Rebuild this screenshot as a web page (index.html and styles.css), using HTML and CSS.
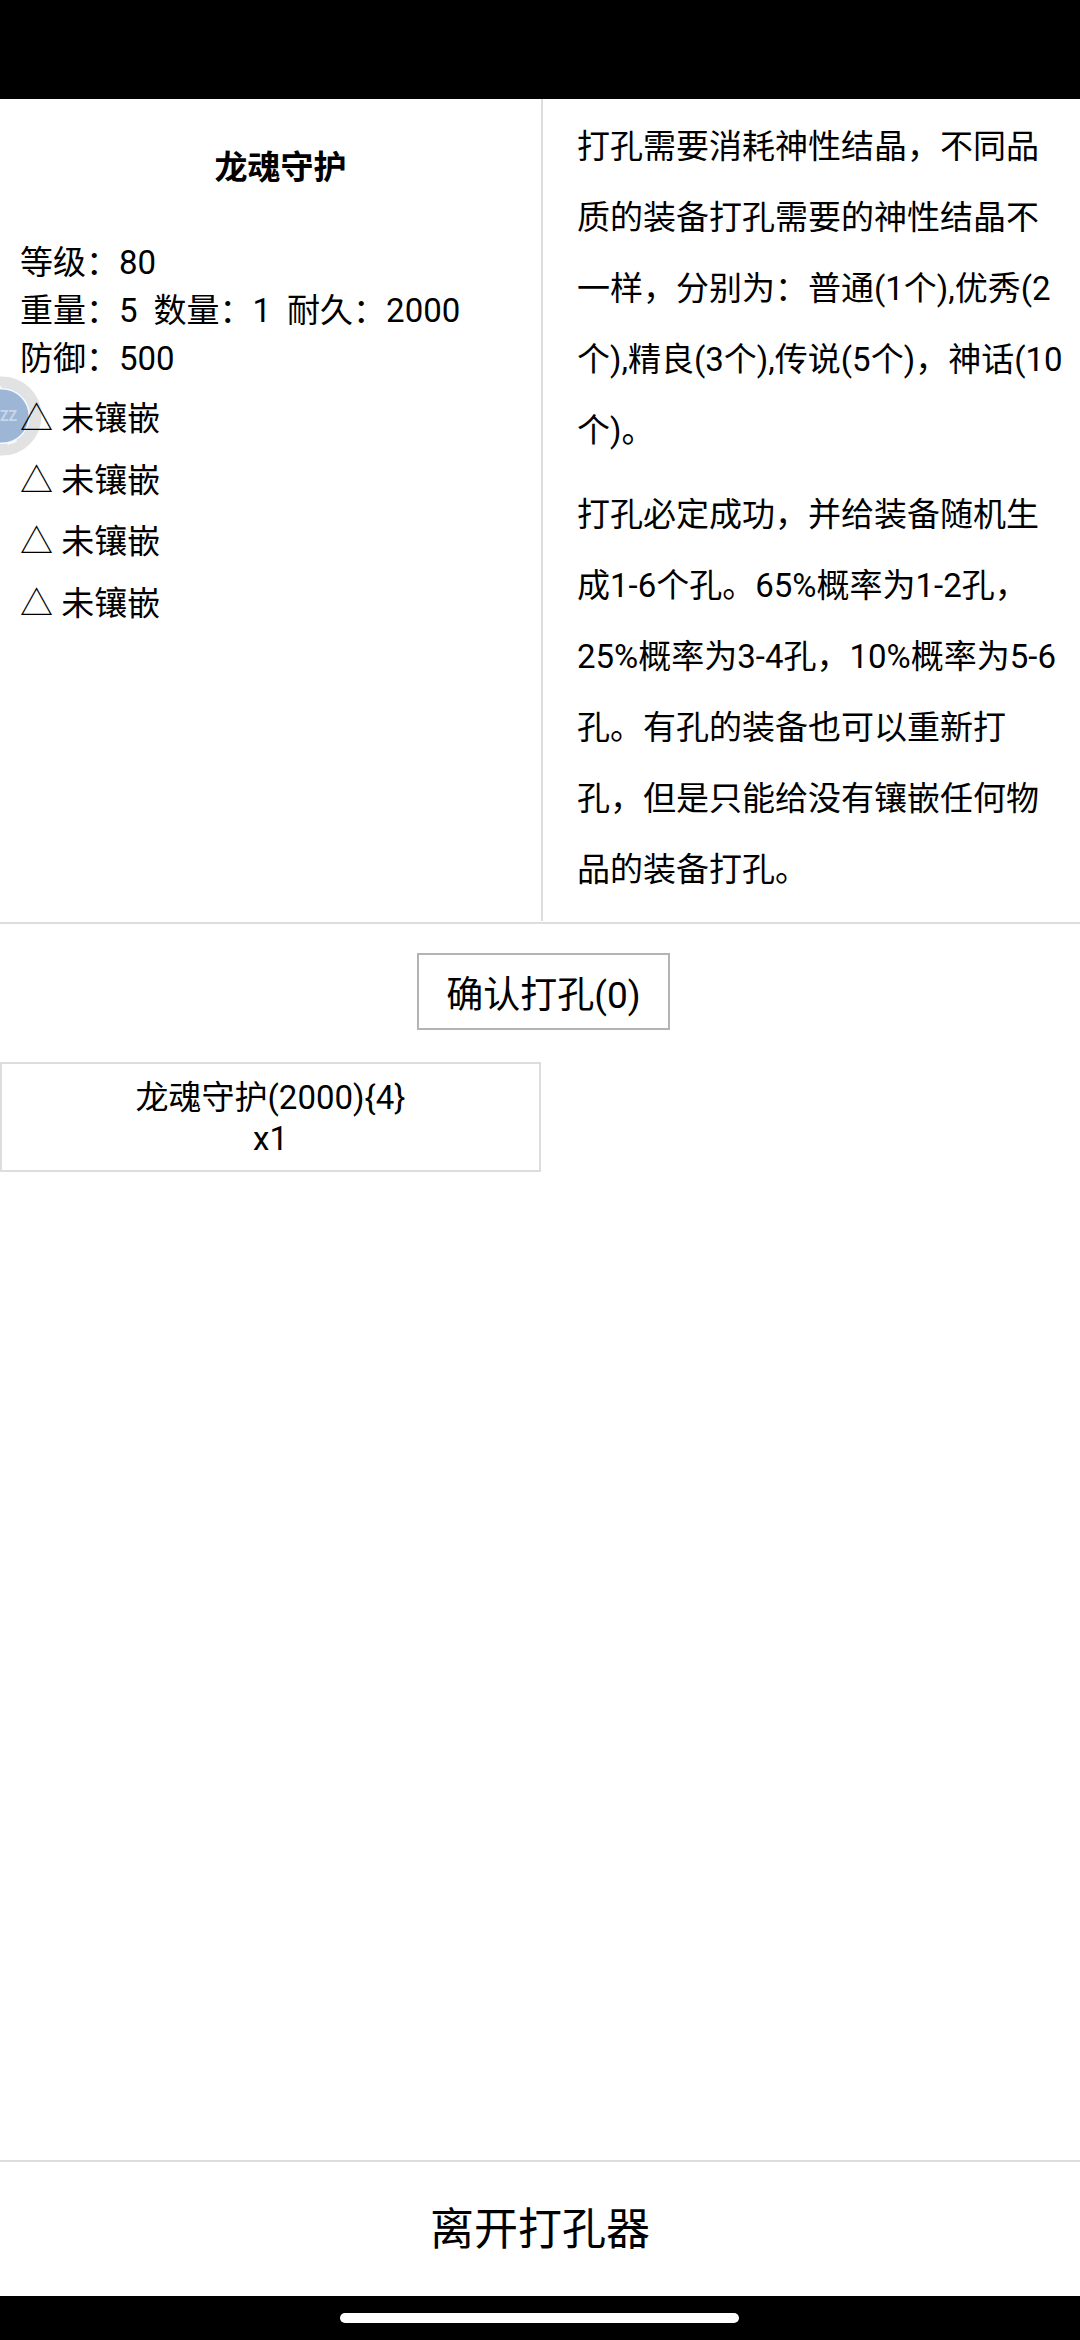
FILE: index.html
```html
<!DOCTYPE html>
<html lang="zh-CN">
<head>
<meta charset="utf-8">
<title>打孔器</title>
<link rel="stylesheet" href="styles.css">
</head>
<body>
<div class="app">
  <div class="status-bar"></div>
  <section class="panel">
    <div class="info">
      <h1 class="title">龙魂守护</h1>
      <div class="stats">
        <div>等级：80</div>
        <div class="stat-row"><span>重量：5</span><span>数量：1</span><span>耐久：2000</span></div>
        <div>防御：500</div>
      </div>
      <ul class="sockets">
        <li>△ 未镶嵌</li>
        <li>△ 未镶嵌</li>
        <li>△ 未镶嵌</li>
        <li>△ 未镶嵌</li>
      </ul>
    </div>
    <div class="desc">
      <p>打孔需要消耗神性结晶，不同品质的装备打孔需要的神性结晶不一样，分别为：普通(1个),优秀(2个),精良(3个),传说(5个)，神话(10个)。</p>
      <p>打孔必定成功，并给装备随机生成1-6个孔。65%概率为1-2孔，25%概率为3-4孔，10%概率为5-6孔。有孔的装备也可以重新打孔，但是只能给没有镶嵌任何物品的装备打孔。</p>
    </div>
  </section>
  <div class="action"><button class="confirm">确认打孔(0)</button></div>
  <div class="items">
    <div class="item">龙魂守护(2000){4}<br>x1</div>
  </div>
  <button class="leave">离开打孔器</button>
  <div class="nav-bar"><span class="nav-pill"></span></div>
  <svg class="bubble" width="44" height="80" viewBox="0 0 44 80" aria-hidden="true">
    <circle cx="2" cy="40" r="34.5" fill="none" stroke="#e2e2e2" stroke-width="10"/>
    <circle cx="2" cy="40" r="29" fill="#f6f8fb"/>
    <circle cx="2" cy="40" r="29" fill="none" stroke="#dbe2ea" stroke-width="2" stroke-dasharray="30 10 44 12"/>
    <circle cx="2" cy="40" r="26.5" fill="#9db6d6"/>
    <text class="bubble-text" x="0" y="45">ZZ</text>
  </svg>
</div>
</body>
</html>
```
FILE: styles.css
```css
* { box-sizing: border-box; }
html, body { margin: 0; padding: 0; }
body { background: #fff; color: #000; font-family: Roboto, "Noto Sans CJK SC", sans-serif; }
.app { position: relative; width: 1080px; height: 2340px; display: flex; flex-direction: column; overflow: hidden; }
.status-bar { height: 99px; background: #000; flex: none; }
.panel { height: 825px; flex: none; display: flex; border-bottom: 2px solid #ddd; }
.info { width: 543px; height: 822px; flex: none; padding: 0 0 0 20px; border-right: 2px solid #ddd; }
.title { margin: 0; padding-top: 47px; font-size: 33px; font-weight: 700; line-height: 44px; text-align: center; }
.stats { margin-top: 49px; font-size: 33px; line-height: 48px; }
.stat-row { display: flex; gap: 16px; }
.sockets { list-style: none; margin: 5px 0 0; padding: 0; font-size: 33px; line-height: 61.6px; }
.desc { flex: 1; padding: 12px 15px 0 34px; font-size: 33px; line-height: 71px; }
.desc p { margin: 0 0 13px; }
.action { height: 138px; flex: none; padding: 29px 0 0 7px; display: flex; justify-content: center; align-items: flex-start; }
.confirm { width: 253px; height: 77px; padding: 0; background: #fff; border: 2px solid #b4b4b4; font: inherit; font-size: 37px; color: #000; }
.items { flex: 1; }
.item { width: 541px; height: 110px; padding-top: 13px; border: 2px solid #ddd; font-size: 33px; line-height: 41px; text-align: center; }
.leave { height: 136px; flex: none; padding: 0 0 7px; background: #fff; border: 0; border-top: 2px solid #ddd; font: inherit; font-size: 44px; color: #000; }
.nav-bar { height: 44px; flex: none; background: #000; display: flex; justify-content: center; padding-top: 17px; padding-right: 1px; }
.nav-pill { width: 399px; height: 10px; border-radius: 5px; background: #fff; }
.bubble { position: absolute; left: 0; top: 376px; z-index: -1; }
.bubble-text { font-family: Roboto, sans-serif; font-size: 14px; font-weight: 700; fill: #c9d6e7; }
```
